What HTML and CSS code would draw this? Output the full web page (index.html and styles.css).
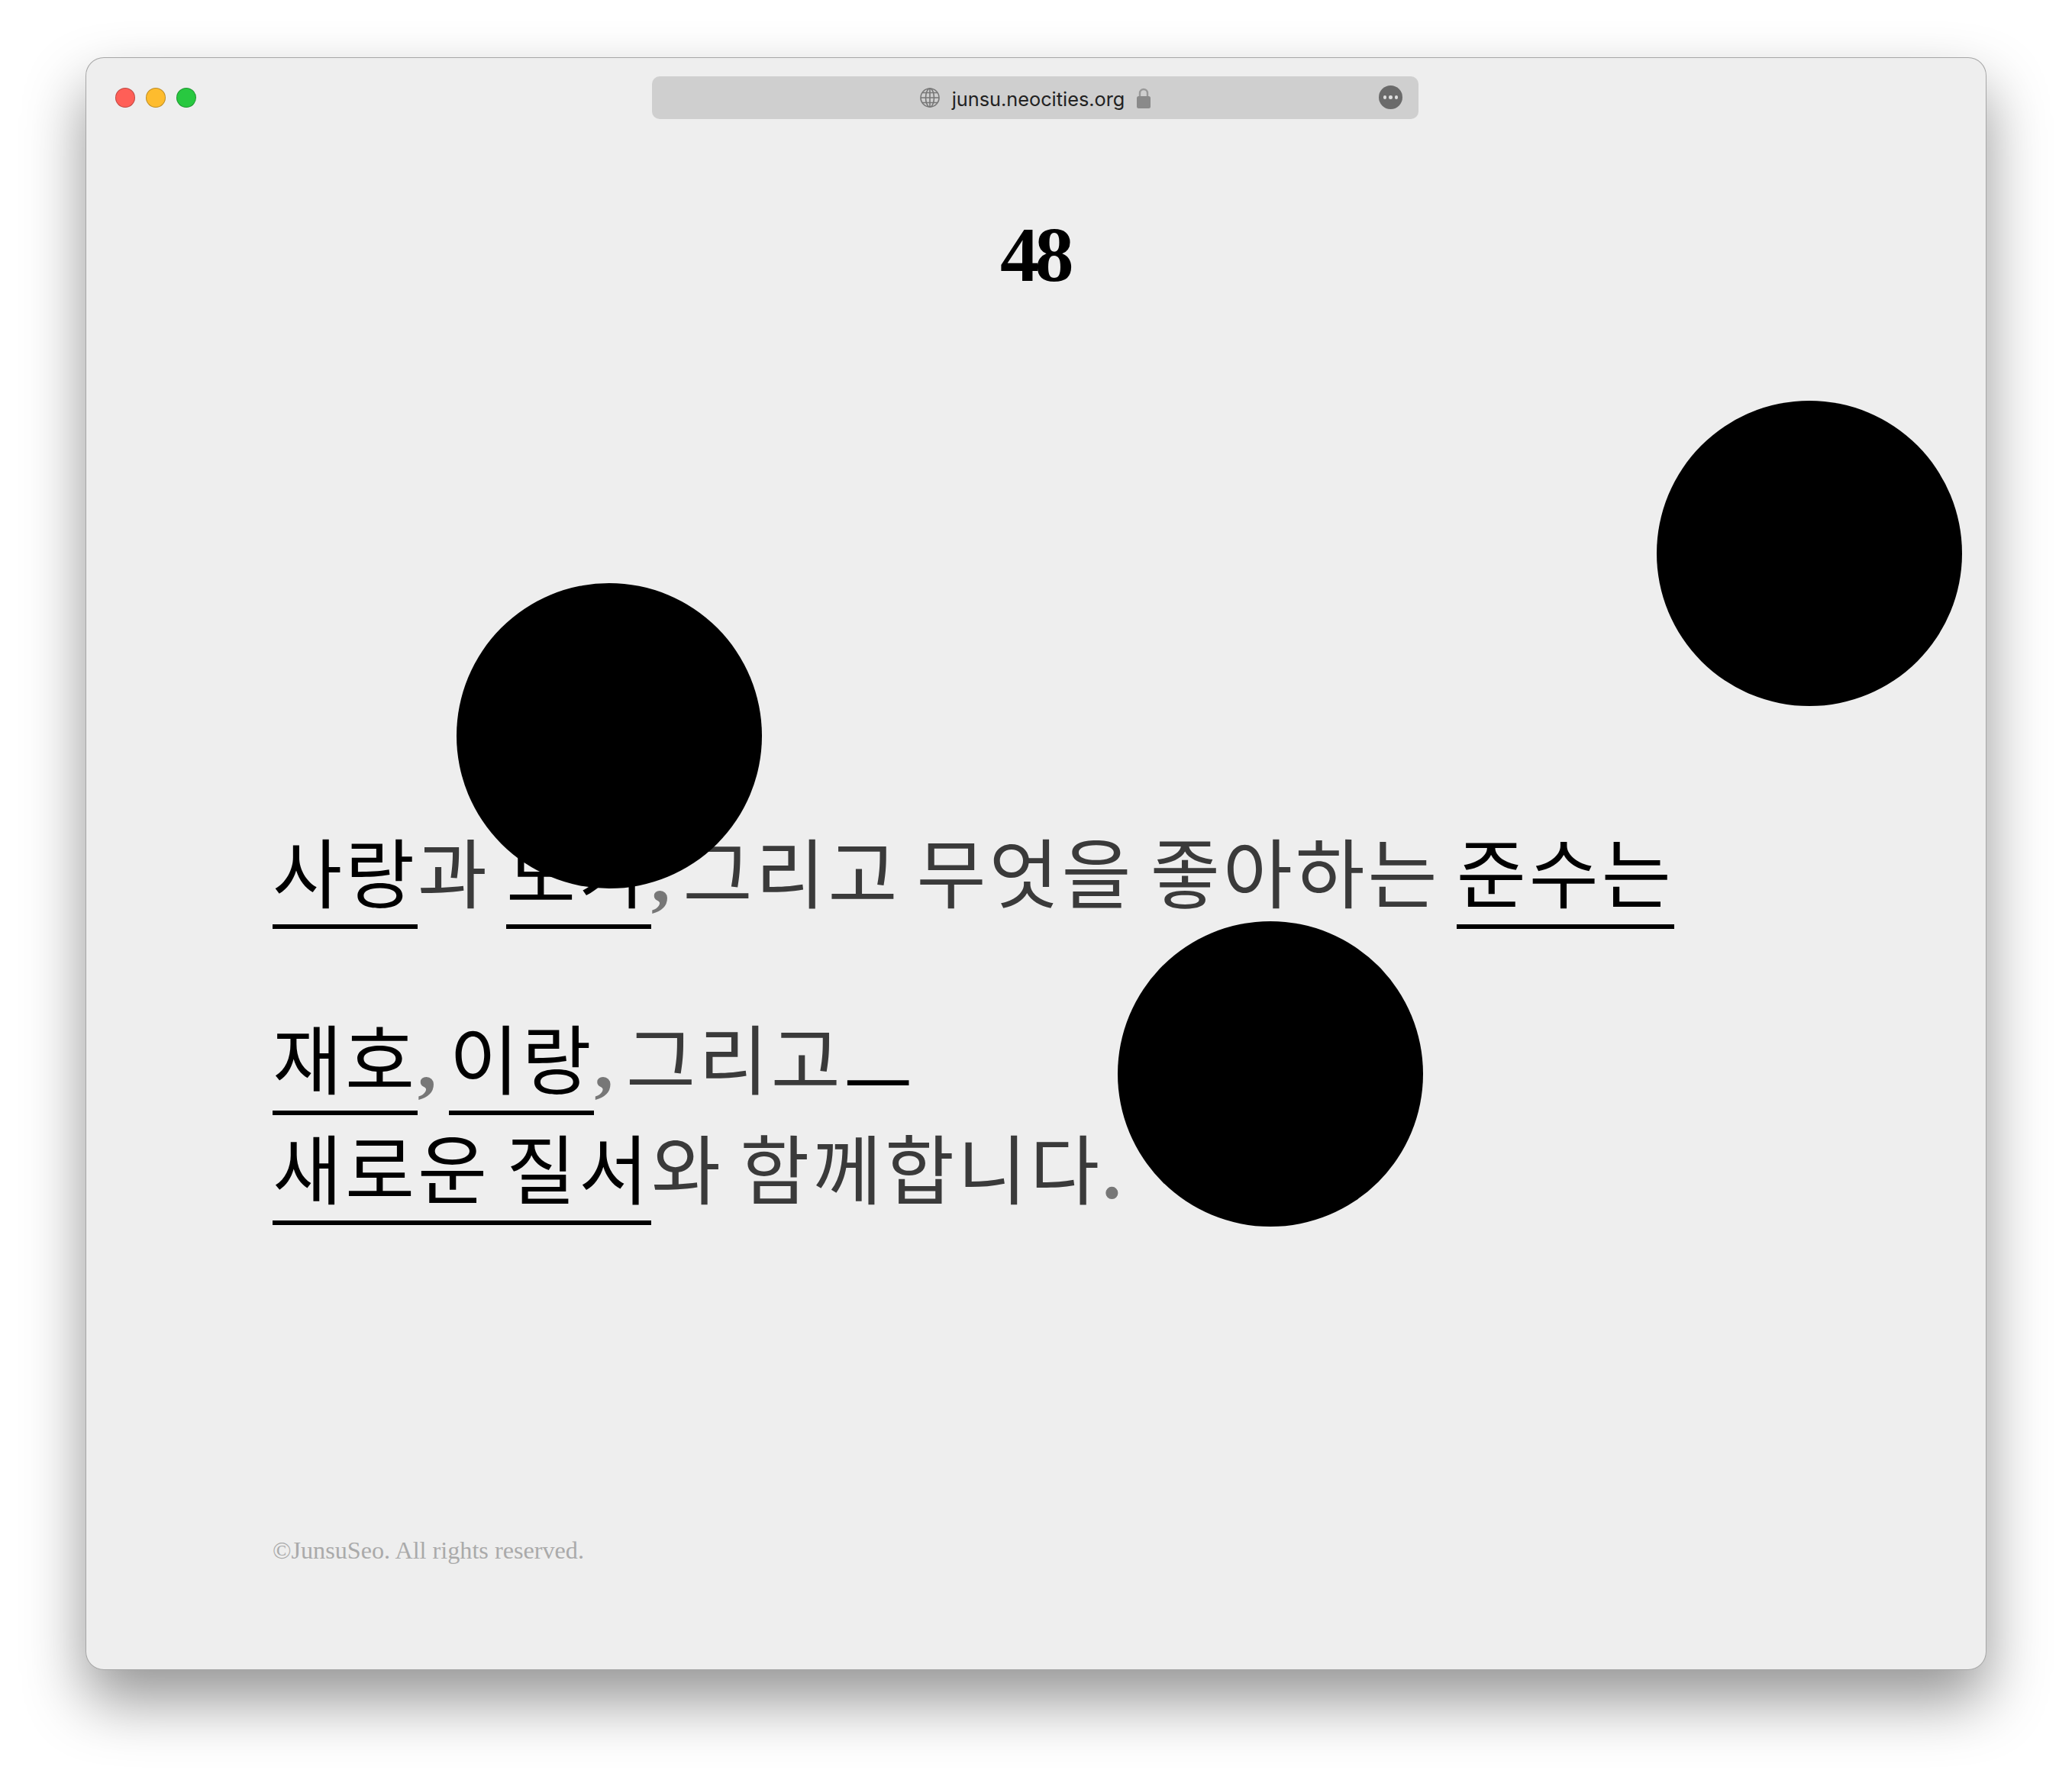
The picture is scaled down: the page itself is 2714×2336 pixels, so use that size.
FILE: index.html
```html
<!DOCTYPE html>
<html lang="ko">

<head>
    <meta charset="UTF-8">
    <meta name="viewport" content="width=device-width, initial-scale=1.0">
    <title>48</title>
    <link rel="stylesheet" href="styles.css">
</head>

<body>
    <div class="window">
        <div class="titlebar">
            <div class="lights">
                <span class="light red"></span>
                <span class="light yellow"></span>
                <span class="light green"></span>
            </div>
            <div class="urlbar">
                <svg class="globe" viewBox="0 0 26 26" fill="none" stroke="#777" stroke-width="1.6">
                    <circle cx="13" cy="13" r="12"/>
                    <ellipse cx="13" cy="13" rx="5.5" ry="12"/>
                    <path d="M13 1v24M1 13h24M3 6.5h20M3 19.5h20"/>
                </svg>
                <span class="url">junsu.neocities.org</span>
                <svg class="lock" viewBox="0 0 18 27">
                    <path d="M4 13V7a5 5 0 0 1 10 0v6" fill="none" stroke="#999" stroke-width="2.4"/>
                    <rect x="0" y="11" width="18" height="16" rx="2.5" fill="#8a8a8a"/>
                </svg>
                <span class="more"><i></i><i></i><i></i></span>
            </div>
        </div>

        <h1 class="title">48</h1>

        <div class="content">
            <p class="line"><a class="link">사랑</a>과 <a class="link">도가</a><span class="comma">,</span> 그리고 무엇을 좋아하는 <a class="link">준수는</a></p>
            <p class="line"><a class="link">재호</a><span class="comma">,</span> <a class="link">이랑</a><span class="comma">,</span> 그리고<span class="cursor">ㅡ</span><br><a class="link">새로운 질서</a>와 함께합니다<span class="comma">.</span></p>
        </div>

        <p class="copyright">©JunsuSeo. All rights reserved.</p>

        <div class="ball ball-1"></div>
        <div class="ball ball-2"></div>
        <div class="ball ball-3"></div>
    </div>
</body>

</html>
```

FILE: styles.css
```css
html,
body {
    height: 100%;
}

body {
    margin: 0;
    padding: 75px 112px 148px;
    box-sizing: border-box;
    background-color: #fff;
}

.window {
    position: relative;
    height: 100%;
    border-radius: 24px;
    background-color: #eee;
    box-shadow: inset 0 0 0 1px rgba(0, 0, 0, 0.3), 0 40px 80px rgba(0, 0, 0, 0.42);
    padding: 25px 245px 0;
    box-sizing: border-box;
    display: flex;
    flex-direction: column;
}

.titlebar {
    height: 56px;
    margin: 0 -245px;
    padding: 0 39px;
    display: flex;
    align-items: center;
    position: relative;
}

.lights {
    display: flex;
    gap: 14px;
}

.light {
    width: 26px;
    height: 26px;
    border-radius: 50%;
    box-sizing: border-box;
    border: 1px solid rgba(0, 0, 0, 0.25);
}

.red {
    background-color: #ff5f57;
}

.yellow {
    background-color: #febc2e;
}

.green {
    background-color: #28c840;
}

.urlbar {
    position: absolute;
    left: 742px;
    width: 1004px;
    height: 56px;
    border-radius: 10px;
    background-color: #cfcfcf;
    display: flex;
    align-items: center;
    justify-content: center;
    gap: 16px;
}

.globe {
    width: 26px;
    height: 26px;
}

.url {
    padding-top: 2px;
    font-family: Inter, "Liberation Sans", sans-serif;
    font-size: 25.3px;
    color: #222;
}

.lock {
    width: 18px;
    height: 27px;
}

.more {
    position: absolute;
    right: 21px;
    top: 12px;
    width: 31px;
    height: 31px;
    border-radius: 50%;
    background-color: #6a6a6a;
    display: flex;
    align-items: center;
    justify-content: center;
    gap: 3px;
}

.more i {
    width: 4.5px;
    height: 4.5px;
    border-radius: 50%;
    background-color: #ddd;
}

.title {
    margin: 127px 0 0;
    padding-right: 3px;
    font-family: "Liberation Serif", serif;
    font-size: 102px;
    font-weight: bold;
    line-height: 102px;
    letter-spacing: -5.5px;
    text-align: center;
    color: #000;
}

.content {
    margin-top: 682px;
    font-family: "Noto Sans CJK KR", sans-serif;
    font-size: 99px;
    font-weight: 400;
    line-height: 144px;
    letter-spacing: 3.9px;
    word-spacing: -10.5px;
    color: #3a3a3a;
}

.line {
    margin: 0 0 100px;
}

.link {
    color: #000;
    border-bottom: 6px solid #000;
}

.comma {
    color: #777;
    font-family: "Liberation Serif", serif;
    font-weight: bold;
    line-height: 0;
    letter-spacing: -4.4px;
}

.cursor {
    color: #000;
    vertical-align: -0.31em;
    line-height: 0;
}

.copyright {
    margin: 0;
    position: absolute;
    left: 245px;
    bottom: 138px;
    font-family: "Liberation Serif", serif;
    font-size: 32.2px;
    color: #aaa;
}

.ball {
    position: absolute;
    width: 400px;
    height: 400px;
    border-radius: 50%;
    background-color: #000;
}

.ball-1 {
    left: 486px;
    top: 689px;
}

.ball-2 {
    left: 2058px;
    top: 450px;
}

.ball-3 {
    left: 1352px;
    top: 1132px;
}
```
